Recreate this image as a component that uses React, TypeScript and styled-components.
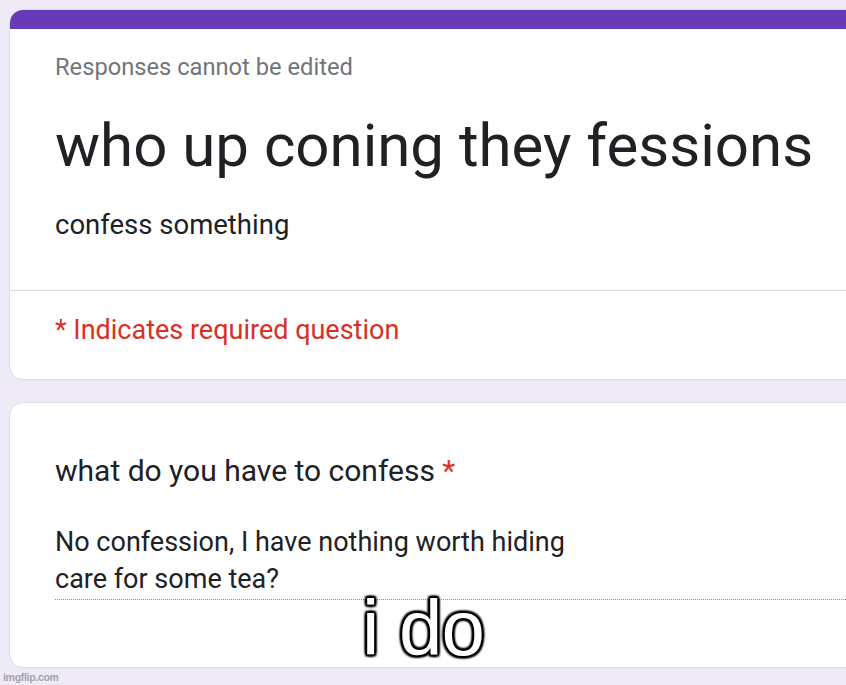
import styled, { createGlobalStyle } from 'styled-components';

const GlobalStyle = createGlobalStyle`
  html, body {
    margin: 0;
    padding: 0;
    background: #eeebf6;
  }
  body {
    font-family: Roboto, "Noto Sans", Arial, sans-serif;
  }
`;

const App = (): JSX.Element => {
  return (
    <Page>
      <GlobalStyle />
      <Card>
        <TopBar />
        <Header>
          <Note>Responses cannot be edited</Note>
          <Title>who up coning they fessions</Title>
          <Description>confess something</Description>
        </Header>
        <Required>* Indicates required question</Required>
      </Card>
      <QuestionCard>
        <Question>
          what do you have to confess <Star>*</Star>
        </Question>
        <Answer>
          <AnswerLine>No confession, I have nothing worth hiding</AnswerLine>
          <AnswerLine>care for some tea?</AnswerLine>
        </Answer>
        <Caption>i do</Caption>
      </QuestionCard>
      <Watermark>imgflip.com</Watermark>
    </Page>
  );
};

export default App;

const Page = styled.main`
  width: 846px;
  height: 685px;
  overflow: hidden;
  box-sizing: border-box;
  padding: 9px 0 0 9px;
  display: flex;
  flex-direction: column;
  gap: 22px;
  position: relative;
`;

const Card = styled.section`
  width: 900px;
  background: #fff;
  border: 1px solid #dadce0;
  border-radius: 14px;
  box-sizing: border-box;
  overflow: hidden;
  display: flex;
  flex-direction: column;
`;

const TopBar = styled.div`
  height: 19px;
  background: #673ab7;
`;

const Header = styled.div`
  padding: 23px 0 0 45px;
  height: 262px;
  box-sizing: border-box;
  border-bottom: 1px solid #dadce0;
`;

const Note = styled.div`
  font-size: 23.7px;
  line-height: 30px;
  color: #70757a;
`;

const Title = styled.h1`
  margin: 29px 0 0;
  font-size: 60px;
  font-weight: 400;
  line-height: 70px;
  color: #202124;
`;

const Description = styled.div`
  margin-top: 27px;
  font-size: 27.5px;
  line-height: 34px;
  color: #202124;
`;

const Required = styled.div`
  padding: 22px 0 0 45px;
  height: 88px;
  box-sizing: border-box;
  font-size: 27px;
  line-height: 34px;
  color: #d93025;
`;

const QuestionCard = styled.section`
  width: 900px;
  height: 266px;
  background: #fff;
  border: 1px solid #dadce0;
  border-radius: 14px;
  box-sizing: border-box;
  padding: 50px 0 0 45px;
  position: relative;
`;

const Question = styled.div`
  font-size: 30px;
  line-height: 36px;
  color: #202124;
`;

const Star = styled.span`
  color: #d93025;
`;

const Answer = styled.div`
  margin-top: 35px;
  border-bottom: 1px dotted #8a8a8a;
  padding-bottom: 1px;
`;

const AnswerLine = styled.div`
  font-size: 27px;
  line-height: 37px;
  color: #202124;
`;

const Caption = styled.div`
  position: absolute;
  left: 352px;
  top: 182px;
  font-family: "Liberation Sans", Arial, sans-serif;
  font-size: 78px;
  line-height: 86px;
  color: #fff;
  letter-spacing: -1px;
  text-shadow:
    2px 2px 2px #000,
    -2px -2px 2px #000,
    2px -2px 2px #000,
    -2px 2px 2px #000,
    0 2px 2px #000,
    0 -2px 2px #000,
    2px 0 2px #000,
    -2px 0 2px #000,
    0 0 4px #000;
`;

const Watermark = styled.div`
  position: absolute;
  left: 3px;
  bottom: 2px;
  font-family: "Liberation Sans", Arial, sans-serif;
  font-size: 10.5px;
  font-weight: 700;
  color: #a4a4a8;
  letter-spacing: -0.3px;
`;
